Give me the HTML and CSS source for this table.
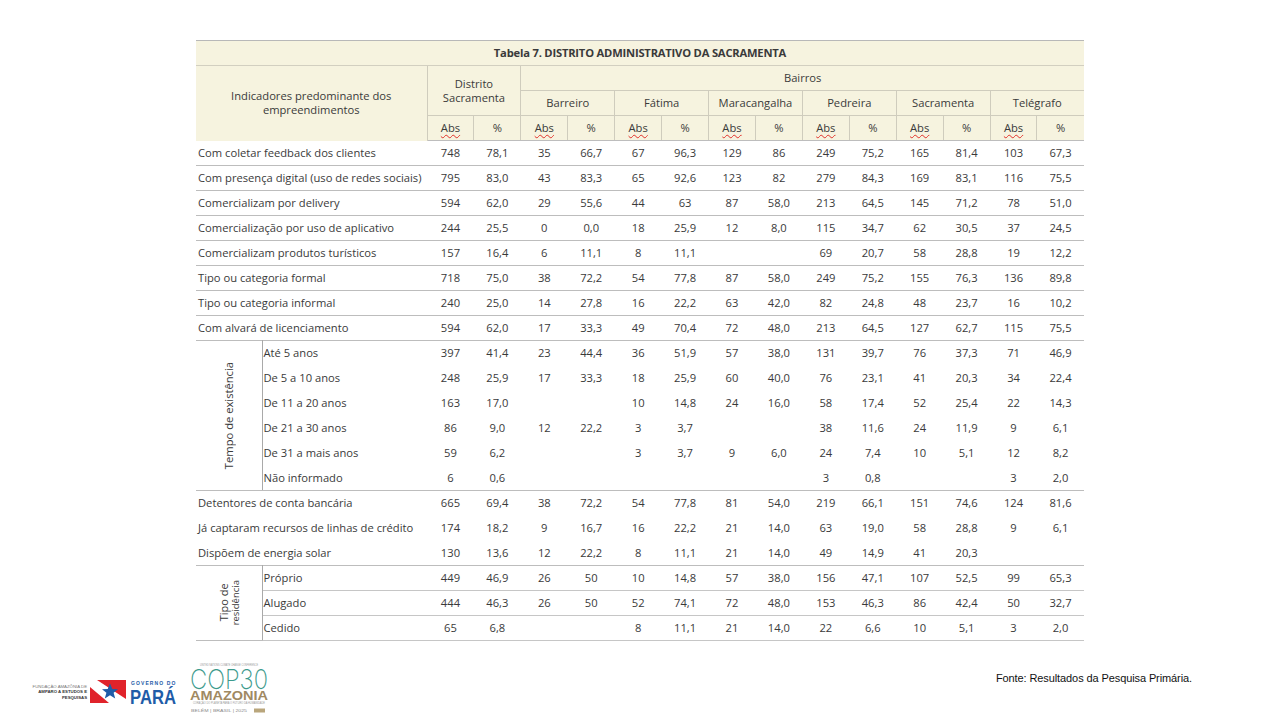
FILE: index.html
```html
<!DOCTYPE html>
<html lang="pt-BR">
<head>
<meta charset="utf-8">
<title>Tabela 7. Distrito Administrativo da Sacramenta</title>
<link rel="stylesheet" href="styles.css">
</head>
<body>
<div class="page">
  <div class="table-wrap">
    <table class="data">
      <colgroup>
        <col class="c-group"><col class="c-label">
        <col class="c-n"><col class="c-n"><col class="c-n"><col class="c-n"><col class="c-n"><col class="c-n"><col class="c-n">
        <col class="c-n"><col class="c-n"><col class="c-n"><col class="c-n"><col class="c-n"><col class="c-n"><col class="c-n">
      </colgroup>
      <thead>
        <tr class="h-title"><th colspan="16">Tabela 7. DISTRITO ADMINISTRATIVO DA SACRAMENTA</th></tr>
        <tr class="h-row">
          <th colspan="2" rowspan="3" class="h-ind">Indicadores predominante dos<br>empreendimentos</th>
          <th colspan="2" rowspan="2" class="h-dist">Distrito<br>Sacramenta</th>
          <th colspan="12" class="h-bairros">Bairros</th>
        </tr>
        <tr class="h-row">
          <th colspan="2" class="h-b">Barreiro</th>
          <th colspan="2" class="h-b">Fátima</th>
          <th colspan="2" class="h-b">Maracangalha</th>
          <th colspan="2" class="h-b">Pedreira</th>
          <th colspan="2" class="h-b">Sacramenta</th>
          <th colspan="2" class="h-b">Telégrafo</th>
        </tr>
        <tr class="h-row h-sub">
          <th class="h-abs"><span class="sq">Abs</span></th><th class="h-pct">%</th>
          <th class="h-abs"><span class="sq">Abs</span></th><th class="h-pct">%</th>
          <th class="h-abs"><span class="sq">Abs</span></th><th class="h-pct">%</th>
          <th class="h-abs"><span class="sq">Abs</span></th><th class="h-pct">%</th>
          <th class="h-abs"><span class="sq">Abs</span></th><th class="h-pct">%</th>
          <th class="h-abs"><span class="sq">Abs</span></th><th class="h-pct">%</th>
          <th class="h-abs"><span class="sq">Abs</span></th><th class="h-pct">%</th>
        </tr>
      </thead>
      <tbody>
        <tr><td colspan="2" class="lbl">Com coletar feedback dos clientes</td><td>748</td><td>78,1</td><td>35</td><td>66,7</td><td>67</td><td>96,3</td><td>129</td><td>86</td><td>249</td><td>75,2</td><td>165</td><td>81,4</td><td>103</td><td>67,3</td></tr>
        <tr class="ln"><td colspan="2" class="lbl">Com presença digital (uso de redes sociais)</td><td>795</td><td>83,0</td><td>43</td><td>83,3</td><td>65</td><td>92,6</td><td>123</td><td>82</td><td>279</td><td>84,3</td><td>169</td><td>83,1</td><td>116</td><td>75,5</td></tr>
        <tr class="ln"><td colspan="2" class="lbl">Comercializam por delivery</td><td>594</td><td>62,0</td><td>29</td><td>55,6</td><td>44</td><td>63</td><td>87</td><td>58,0</td><td>213</td><td>64,5</td><td>145</td><td>71,2</td><td>78</td><td>51,0</td></tr>
        <tr class="ln"><td colspan="2" class="lbl">Comercialização por uso de aplicativo</td><td>244</td><td>25,5</td><td>0</td><td>0,0</td><td>18</td><td>25,9</td><td>12</td><td>8,0</td><td>115</td><td>34,7</td><td>62</td><td>30,5</td><td>37</td><td>24,5</td></tr>
        <tr class="ln"><td colspan="2" class="lbl">Comercializam produtos turísticos</td><td>157</td><td>16,4</td><td>6</td><td>11,1</td><td>8</td><td>11,1</td><td></td><td></td><td>69</td><td>20,7</td><td>58</td><td>28,8</td><td>19</td><td>12,2</td></tr>
        <tr class="ln"><td colspan="2" class="lbl">Tipo ou categoria formal</td><td>718</td><td>75,0</td><td>38</td><td>72,2</td><td>54</td><td>77,8</td><td>87</td><td>58,0</td><td>249</td><td>75,2</td><td>155</td><td>76,3</td><td>136</td><td>89,8</td></tr>
        <tr class="ln"><td colspan="2" class="lbl">Tipo ou categoria informal</td><td>240</td><td>25,0</td><td>14</td><td>27,8</td><td>16</td><td>22,2</td><td>63</td><td>42,0</td><td>82</td><td>24,8</td><td>48</td><td>23,7</td><td>16</td><td>10,2</td></tr>
        <tr class="ln"><td colspan="2" class="lbl">Com alvará de licenciamento</td><td>594</td><td>62,0</td><td>17</td><td>33,3</td><td>49</td><td>70,4</td><td>72</td><td>48,0</td><td>213</td><td>64,5</td><td>127</td><td>62,7</td><td>115</td><td>75,5</td></tr>
        <tr class="ln"><td rowspan="6" class="grp"><div class="vert">Tempo de existência</div></td><td class="sub">Até 5 anos</td><td>397</td><td>41,4</td><td>23</td><td>44,4</td><td>36</td><td>51,9</td><td>57</td><td>38,0</td><td>131</td><td>39,7</td><td>76</td><td>37,3</td><td>71</td><td>46,9</td></tr>
        <tr><td class="sub">De 5 a 10 anos</td><td>248</td><td>25,9</td><td>17</td><td>33,3</td><td>18</td><td>25,9</td><td>60</td><td>40,0</td><td>76</td><td>23,1</td><td>41</td><td>20,3</td><td>34</td><td>22,4</td></tr>
        <tr><td class="sub">De 11 a 20 anos</td><td>163</td><td>17,0</td><td></td><td></td><td>10</td><td>14,8</td><td>24</td><td>16,0</td><td>58</td><td>17,4</td><td>52</td><td>25,4</td><td>22</td><td>14,3</td></tr>
        <tr><td class="sub">De 21 a 30 anos</td><td>86</td><td>9,0</td><td>12</td><td>22,2</td><td>3</td><td>3,7</td><td></td><td></td><td>38</td><td>11,6</td><td>24</td><td>11,9</td><td>9</td><td>6,1</td></tr>
        <tr><td class="sub">De 31 a mais anos</td><td>59</td><td>6,2</td><td></td><td></td><td>3</td><td>3,7</td><td>9</td><td>6,0</td><td>24</td><td>7,4</td><td>10</td><td>5,1</td><td>12</td><td>8,2</td></tr>
        <tr><td class="sub">Não informado</td><td>6</td><td>0,6</td><td></td><td></td><td></td><td></td><td></td><td></td><td>3</td><td>0,8</td><td></td><td></td><td>3</td><td>2,0</td></tr>
        <tr class="ln"><td colspan="2" class="lbl">Detentores de conta bancária</td><td>665</td><td>69,4</td><td>38</td><td>72,2</td><td>54</td><td>77,8</td><td>81</td><td>54,0</td><td>219</td><td>66,1</td><td>151</td><td>74,6</td><td>124</td><td>81,6</td></tr>
        <tr><td colspan="2" class="lbl">Já captaram recursos de linhas de crédito</td><td>174</td><td>18,2</td><td>9</td><td>16,7</td><td>16</td><td>22,2</td><td>21</td><td>14,0</td><td>63</td><td>19,0</td><td>58</td><td>28,8</td><td>9</td><td>6,1</td></tr>
        <tr><td colspan="2" class="lbl">Dispõem de energia solar</td><td>130</td><td>13,6</td><td>12</td><td>22,2</td><td>8</td><td>11,1</td><td>21</td><td>14,0</td><td>49</td><td>14,9</td><td>41</td><td>20,3</td><td></td><td></td></tr>
        <tr class="ln"><td rowspan="3" class="grp"><div class="vert vert-2"><span class="v1">Tipo de</span><span class="v2">residência</span></div></td><td class="sub">Próprio</td><td>449</td><td>46,9</td><td>26</td><td>50</td><td>10</td><td>14,8</td><td>57</td><td>38,0</td><td>156</td><td>47,1</td><td>107</td><td>52,5</td><td>99</td><td>65,3</td></tr>
        <tr class="ln-part"><td class="sub">Alugado</td><td>444</td><td>46,3</td><td>26</td><td>50</td><td>52</td><td>74,1</td><td>72</td><td>48,0</td><td>153</td><td>46,3</td><td>86</td><td>42,4</td><td>50</td><td>32,7</td></tr>
        <tr class="ln-part last"><td class="sub">Cedido</td><td>65</td><td>6,8</td><td></td><td></td><td>8</td><td>11,1</td><td>21</td><td>14,0</td><td>22</td><td>6,6</td><td>10</td><td>5,1</td><td>3</td><td>2,0</td></tr>
      </tbody>
    </table>
  </div>

  <div class="footer">
    <svg class="logo-para" width="150" height="30" viewBox="0 0 150 30" aria-label="FAPESPA Governo do Pará">
      <g class="fap-text" text-anchor="end">
        <text x="57" y="9.5" class="fap-l1">FUNDAÇÃO AMAZÔNIA DE</text>
        <text x="57" y="15" class="fap-l2">AMPARO A ESTUDOS E</text>
        <text x="57" y="20.5" class="fap-l2">PESQUISAS</text>
      </g>
      <polygon points="60,9 60,25 79,25" fill="#e0232b"/>
      <polygon points="67,2 96,2 96,21" fill="#e0232b"/>
      <polygon points="80,5.5 82.3,11 88,11.3 83.6,14.8 85.2,20.5 80,17.3 74.8,20.5 76.4,14.8 72,11.3 77.7,11" fill="#1f5ca8"/>
      <text x="101" y="7" class="gov">GOVERNO DO</text>
      <text x="100" y="25.5" class="para" textLength="46" lengthAdjust="spacingAndGlyphs">PARÁ</text>
    </svg>
    <svg class="logo-cop" width="90" height="58" viewBox="0 0 90 58" aria-label="COP30 Amazônia">
      <text x="45" y="3.5" class="cop-tiny" text-anchor="middle" textLength="58" lengthAdjust="spacingAndGlyphs">UNITED NATIONS CLIMATE CHANGE CONFERENCE</text>
      <text x="6" y="27" class="cop-big" textLength="78" lengthAdjust="spacingAndGlyphs">COP30</text>
      <text x="6" y="38" class="cop-amz" textLength="78" lengthAdjust="spacingAndGlyphs">AMAZONIA</text>
      <text x="45" y="42" class="cop-tiny" text-anchor="middle" textLength="72" lengthAdjust="spacingAndGlyphs">CORAÇÃO DO PLANETA PARA O FUTURO DA HUMANIDADE</text>
      <text x="7" y="50" class="cop-city" textLength="56" lengthAdjust="spacingAndGlyphs">BELÉM  |  BRASIL  |  2025</text>
      <rect x="70" y="46.5" width="11" height="4" fill="#b9a67c"/>
    </svg>
    <div class="source">Fonte: Resultados da Pesquisa Primária.</div>
  </div>
</div>
</body>
</html>
```

FILE: styles.css
```css
html, body {
  margin: 0;
  padding: 0;
  background: #ffffff;
}

body {
  font-family: "Open Sans", "Noto Sans", sans-serif;
  color: #3a3a3a;
}

.page {
  width: 1280px;
  height: 720px;
  display: flex;
  flex-direction: column;
  overflow: hidden;
}

.table-wrap {
  padding-top: 40px;
  display: flex;
  justify-content: center;
}

.data {
  border-collapse: collapse;
  table-layout: fixed;
  width: 888px;
  font-size: 11.2px;
}

.c-group { width: 66px; }
.c-label { width: 165px; }
.c-n { width: 46.93px; }

.data th,
.data td {
  padding: 0;
  height: 25px;
  box-sizing: border-box;
  text-align: center;
  vertical-align: middle;
  white-space: nowrap;
  font-weight: normal;
  line-height: 14px;
}

.data thead th {
  background: #f6f3df;
  color: #3a3a3a;
}

.h-title th {
  border-top: 1px solid #b8b8b8;
  border-bottom: 1px solid #d2cfc0;
  font-weight: bold;
  color: #1e1e1e;
  font-size: 11.2px;
  letter-spacing: -0.2px;
}

.h-ind {
  border-right: 1px solid #cfccbd;
  line-height: 15px;
}

.h-dist {
  border-right: 1px solid #cfccbd;
  border-bottom: 1px solid #cfccbd;
  line-height: 15px;
}

.h-bairros {
  border-bottom: 1px solid #cfccbd;
}

.h-b {
  border-right: 1px solid #cfccbd;
  border-bottom: 1px solid #cfccbd;
}

.h-b:last-child { border-right: 0; }

.h-abs { border-right: 1px solid #cfccbd; }
.h-pct { border-right: 1px solid #cfccbd; }
.h-sub th:last-child { border-right: 0; }

.h-sub th {
  border-bottom: 1px solid #bdbdbd;
}

.sq {
  text-decoration: underline wavy #e0302a;
  text-decoration-thickness: 1px;
  text-underline-offset: 2px;
}

.data tbody td {
  color: #3a3a3a;
}

.data td.lbl,
.data td.sub {
  text-align: left;
  padding-left: 2px;
}

.data td.sub {
  padding-left: 1px;
}

.data tr.ln td {
  border-top: 1px solid #bdbdbd;
}

.data tr.ln-part td.sub,
.data tr.ln-part td.sub ~ td {
  border-top: 1px solid #c6c6c6;
}

.data tr.last td {
  border-bottom: 1px solid #c6c6c6;
}

.data td.grp {
  border-right: 1px solid #a9a9a9;
  border-bottom: 1px solid #bdbdbd;
  padding: 0;
}

.vert {
  writing-mode: vertical-rl;
  transform: rotate(180deg);
  margin: 0 auto;
  font-size: 11.2px;
  line-height: 14px;
  white-space: nowrap;
  text-align: center;
}

.vert-2 {
  line-height: 13px;
}

.vert-2 .v1 {
  display: block;
  font-size: 11px;
}

.vert-2 .v2 {
  display: block;
  font-size: 9.5px;
  line-height: 11px;
}

/* Footer */
.footer {
  display: flex;
  align-items: flex-start;
  padding: 21px 88px 0 30px;
}

.logo-para {
  margin-top: 16px;
  overflow: visible;
}

.logo-cop {
  margin-left: 4px;
  overflow: visible;
}

.fap-text text {
  font-family: "Liberation Sans", Arial, sans-serif;
  font-size: 4.3px;
}

.fap-l1 { fill: #777777; }
.fap-l2 { fill: #333333; font-weight: bold; }

.gov {
  font-family: "Liberation Sans", Arial, sans-serif;
  font-size: 5px;
  font-weight: bold;
  letter-spacing: 1.1px;
  fill: #1f5ca8;
}

.para {
  font-family: "Liberation Sans", Arial, sans-serif;
  font-size: 21px;
  font-weight: bold;
  fill: #1f5ca8;
}

.cop-tiny {
  font-family: "Liberation Sans", Arial, sans-serif;
  font-size: 2.6px;
  fill: #9a9a9a;
}

.cop-big {
  font-family: Inter, "Liberation Sans", sans-serif;
  font-size: 27px;
  font-weight: 200;
  fill: #3c9a8c;
}

.cop-amz {
  font-family: "Liberation Sans", Arial, sans-serif;
  font-size: 12.5px;
  font-weight: bold;
  fill: #a08962;
}

.cop-city {
  font-family: "Liberation Sans", Arial, sans-serif;
  font-size: 3px;
  fill: #8a8a8a;
}

.source {
  margin-left: auto;
  margin-top: 10px;
  font-family: "Liberation Sans", Arial, sans-serif;
  font-size: 11px;
  color: #111111;
  letter-spacing: -0.1px;
}
```
